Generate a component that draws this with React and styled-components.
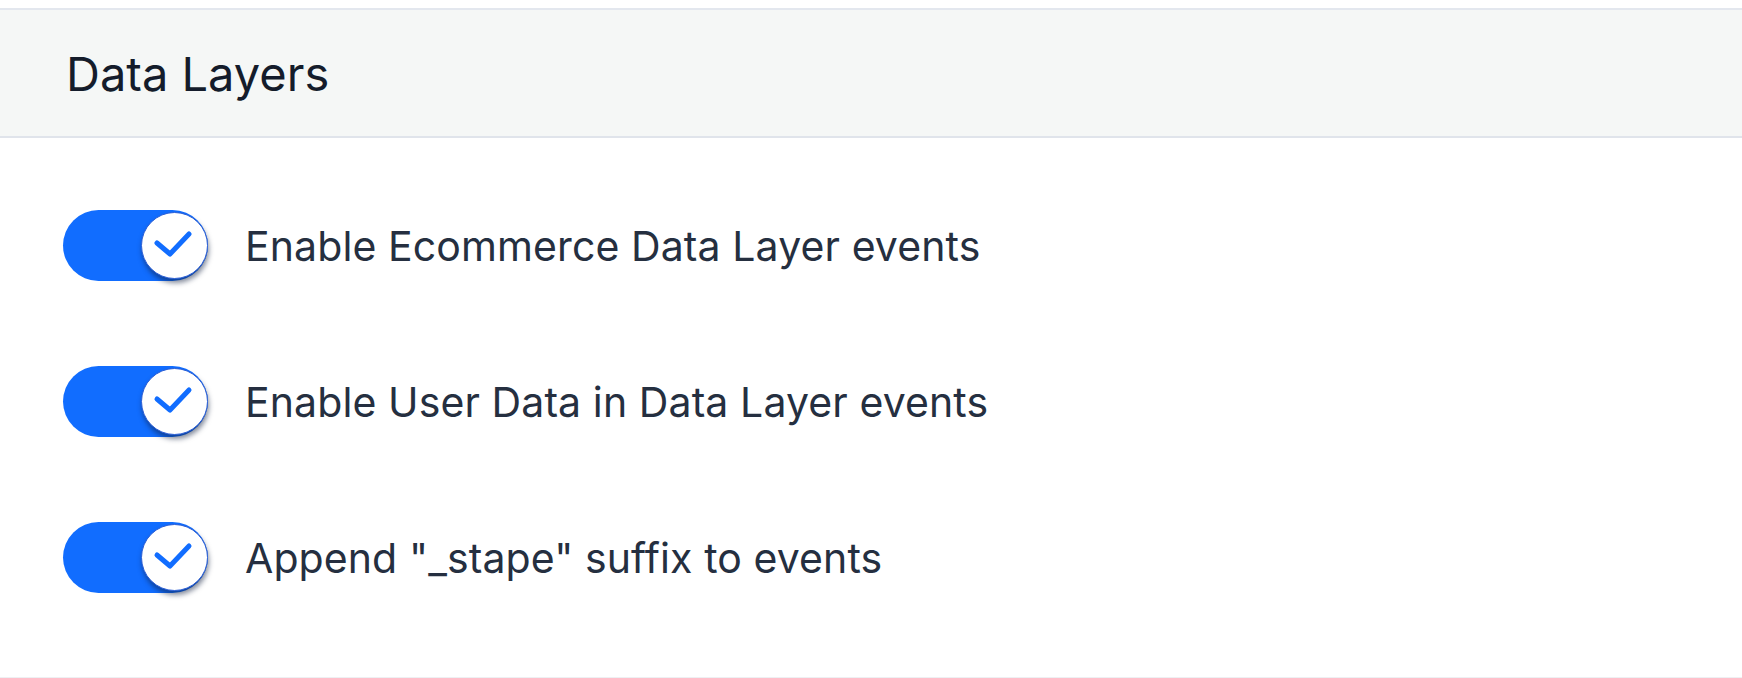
import React from 'react';
import styled, { createGlobalStyle } from 'styled-components';

const GlobalStyle = createGlobalStyle`
  body {
    margin: 0;
    background: #ffffff;
    font-family: Inter, "Noto Sans", sans-serif;
    -webkit-font-smoothing: antialiased;
  }
`;

const Card = styled.section`
  margin-top: 8px;
  border-top: 2px solid #e3e7ee;
  border-bottom: 2px solid #eef0f3;
  background: #ffffff;
`;

const Header = styled.header`
  height: 126px;
  display: flex;
  align-items: center;
  padding-left: 66px;
  background: #f5f7f6;
  border-bottom: 2px solid #e0e4eb;
`;

const Title = styled.h2`
  margin: 0;
  font-size: 47px;
  font-weight: 400;
  color: #141c2b;
  letter-spacing: 0;
`;

const Body = styled.div`
  display: flex;
  flex-direction: column;
  gap: 85px;
  padding: 72px 0 84px 63px;
`;

const Row = styled.label`
  display: flex;
  align-items: center;
  gap: 37px;
  cursor: pointer;
`;

const Track = styled.span`
  position: relative;
  flex: none;
  width: 145px;
  height: 71px;
  border-radius: 36px;
  background: ${(p) => (p.$on ? '#116dff' : '#c9d0da')};
`;

const Knob = styled.span`
  position: absolute;
  top: 2px;
  ${(p) => (p.$on ? 'right: 0;' : 'left: 0;')}
  width: 65px;
  height: 65px;
  border-radius: 50%;
  background: #ffffff;
  border: 1.5px solid #2c5fd6;
  box-shadow: 1px 4px 5px rgba(14, 28, 60, 0.5);
  display: flex;
  align-items: center;
  justify-content: center;
`;

const Label = styled.span`
  font-size: 41px;
  color: #252f40;
  letter-spacing: 0.1px;
`;

const Check = () => (
  <svg width="46" height="46" viewBox="-23 -23 46 46">
    <path
      d="M-18 -3 L-5 8 L14 -12"
      fill="none"
      stroke="#116dff"
      strokeWidth="5"
      strokeLinecap="round"
      strokeLinejoin="round"
    />
  </svg>
);

const Toggle = ({ on }) => (
  <Track $on={on}>
    <Knob $on={on}>{on && <Check />}</Knob>
  </Track>
);

const settings = [
  'Enable Ecommerce Data Layer events',
  'Enable User Data in Data Layer events',
  'Append "_stape" suffix to events',
];

export default function App() {
  return (
    <>
      <GlobalStyle />
      <Card>
        <Header>
          <Title>Data Layers</Title>
        </Header>
        <Body>
          {settings.map((text) => (
            <Row key={text}>
              <Toggle on />
              <Label>{text}</Label>
            </Row>
          ))}
        </Body>
      </Card>
    </>
  );
}
